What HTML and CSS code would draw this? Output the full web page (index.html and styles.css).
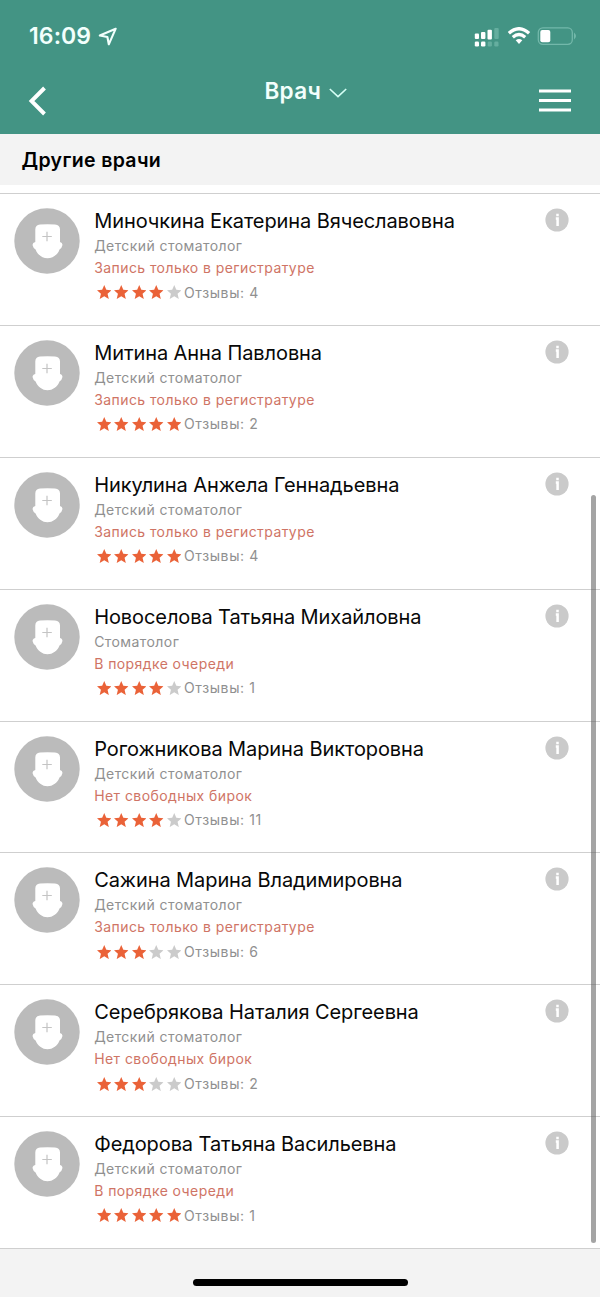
FILE: index.html
```html
<!DOCTYPE html>
<html lang="ru">
<head>
<meta charset="utf-8">
<title>Врач</title>
<link rel="stylesheet" href="styles.css">
</head>
<body>
<svg class="defs" aria-hidden="true">
  <symbol id="avatar" viewBox="0 0 66 66">
    <circle cx="33" cy="33" r="32.7" fill="#bbb"/>
    <path d="M21.300 21.500Q21.300 17 26 16.600Q33.500 15.700 41 16.600Q46 17 46 21.500V34Q49 35 48.300 37.500Q47.700 40.500 45.500 41.500C44 46.500 38.500 50.300 33.500 50.300S23.300 46.500 21.600 41.500Q19.300 40.500 18.700 37.500Q18 35 21.300 34Z" fill="#fff"/>
    <path d="M28.300 28.500H37.800M33 23.700V33.300" stroke="#c4c4c4" stroke-width="1.200"/>
  </symbol>
  <symbol id="star" viewBox="0 0 14 14">
    <path d="M7 0 9 4.700 14 5.100 10.200 8.500 11.400 13.600 7 10.900 2.600 13.600 3.800 8.500 0 5.100 5 4.700Z" fill="currentColor"/>
  </symbol>
  <symbol id="info" viewBox="0 0 24 24">
    <circle cx="12" cy="12" r="11.600" fill="#cacaca"/>
    <path d="M12.500 5.800V8.200M10.800 10.400H12.600V18" fill="none" stroke="#fff" stroke-width="2.500"/>
  </symbol>
</svg>
<div class="screen">
  <header class="header">
    <div class="status">
      <span class="time">16:09</span>
      <svg class="location" viewBox="0 0 20 20"><path d="M17.700 1.700 1.800 8.500 9.400 10 10.800 17.300Z" fill="none" stroke="#f2fffc" stroke-width="2.100" stroke-linejoin="round"/></svg>
      <svg class="signal" viewBox="0 0 26 20">
        <g fill="#fff"><rect x=".8" y="6.500" width="4.200" height="5.500" rx="1"/><rect x="7" y="5" width="4.400" height="7" rx="1"/><rect x="13.500" y="2.700" width="4.400" height="9.800" rx="1"/><rect x=".8" y="14.500" width="4.200" height="5" rx="1.200"/><rect x="7" y="14.500" width="4.400" height="5" rx="1.200"/></g>
        <g fill="#65ae9f"><rect x="20.300" y="1" width="4.400" height="11" rx="1"/><rect x="13.700" y="14.500" width="4.200" height="5" rx="1.200"/><rect x="20.300" y="14.500" width="4.200" height="5" rx="1.200"/></g>
      </svg>
      <svg class="wifi" viewBox="0 0 24 18"><path d="M1.900 6.200Q12 -2.800 22.100 6.200M5.800 10.200Q12 4.900 18.200 10.200" fill="none" stroke="#fff" stroke-width="3.300"/><path d="M8.700 13.300Q12 10.900 15.300 13.300L12 17Z" fill="#fff"/></svg>
      <svg class="battery" viewBox="0 0 40 20"><rect x="1.300" y="1.800" width="34" height="16.500" rx="4.500" fill="none" stroke="#73b8aa" stroke-width="1.300"/><path d="M37 6.500Q41 10 37 13.500Z" fill="#73b8aa"/><rect x="3.300" y="4" width="10" height="12.200" rx="2" fill="#fff"/></svg>
    </div>
    <nav class="nav">
      <svg class="back" viewBox="0 0 20 30"><path d="M16.500 2 3.500 15 16.500 28" fill="none" stroke="#fff" stroke-width="3.900"/></svg>
      <div class="title"><span>Врач</span><svg class="chevron" viewBox="0 0 18 12"><path d="M.8 2 9 9.700 17.200 2" fill="none" stroke="#d5fff5" stroke-width="1.600"/></svg></div>
      <svg class="menu" viewBox="0 0 32 24"><path d="M0 2H32M0 11.500H32M0 21H32" stroke="#fff" stroke-width="2.900"/></svg>
    </nav>
  </header>
  <h1 class="section">Другие врачи</h1>
  <main class="list">
    <article class="row">
      <svg class="avatar"><use href="#avatar"/></svg>
      <div class="body">
        <h2 class="name">Миночкина Екатерина Вячеславовна</h2>
        <p class="role">Детский стоматолог</p>
        <p class="note">Запись только в регистратуре</p>
        <div class="rating"><svg class="star"><use href="#star"/></svg><svg class="star"><use href="#star"/></svg><svg class="star"><use href="#star"/></svg><svg class="star"><use href="#star"/></svg><svg class="star off"><use href="#star"/></svg><span class="reviews">Отзывы: 4</span></div>
      </div>
      <svg class="info"><use href="#info"/></svg>
    </article>
    <article class="row">
      <svg class="avatar"><use href="#avatar"/></svg>
      <div class="body">
        <h2 class="name">Митина Анна Павловна</h2>
        <p class="role">Детский стоматолог</p>
        <p class="note">Запись только в регистратуре</p>
        <div class="rating"><svg class="star"><use href="#star"/></svg><svg class="star"><use href="#star"/></svg><svg class="star"><use href="#star"/></svg><svg class="star"><use href="#star"/></svg><svg class="star"><use href="#star"/></svg><span class="reviews">Отзывы: 2</span></div>
      </div>
      <svg class="info"><use href="#info"/></svg>
    </article>
    <article class="row">
      <svg class="avatar"><use href="#avatar"/></svg>
      <div class="body">
        <h2 class="name">Никулина Анжела Геннадьевна</h2>
        <p class="role">Детский стоматолог</p>
        <p class="note">Запись только в регистратуре</p>
        <div class="rating"><svg class="star"><use href="#star"/></svg><svg class="star"><use href="#star"/></svg><svg class="star"><use href="#star"/></svg><svg class="star"><use href="#star"/></svg><svg class="star"><use href="#star"/></svg><span class="reviews">Отзывы: 4</span></div>
      </div>
      <svg class="info"><use href="#info"/></svg>
    </article>
    <article class="row">
      <svg class="avatar"><use href="#avatar"/></svg>
      <div class="body">
        <h2 class="name">Новоселова Татьяна Михайловна</h2>
        <p class="role">Стоматолог</p>
        <p class="note">В порядке очереди</p>
        <div class="rating"><svg class="star"><use href="#star"/></svg><svg class="star"><use href="#star"/></svg><svg class="star"><use href="#star"/></svg><svg class="star"><use href="#star"/></svg><svg class="star off"><use href="#star"/></svg><span class="reviews">Отзывы: 1</span></div>
      </div>
      <svg class="info"><use href="#info"/></svg>
    </article>
    <article class="row">
      <svg class="avatar"><use href="#avatar"/></svg>
      <div class="body">
        <h2 class="name">Рогожникова Марина Викторовна</h2>
        <p class="role">Детский стоматолог</p>
        <p class="note">Нет свободных бирок</p>
        <div class="rating"><svg class="star"><use href="#star"/></svg><svg class="star"><use href="#star"/></svg><svg class="star"><use href="#star"/></svg><svg class="star"><use href="#star"/></svg><svg class="star off"><use href="#star"/></svg><span class="reviews">Отзывы: 11</span></div>
      </div>
      <svg class="info"><use href="#info"/></svg>
    </article>
    <article class="row">
      <svg class="avatar"><use href="#avatar"/></svg>
      <div class="body">
        <h2 class="name">Сажина Марина Владимировна</h2>
        <p class="role">Детский стоматолог</p>
        <p class="note">Запись только в регистратуре</p>
        <div class="rating"><svg class="star"><use href="#star"/></svg><svg class="star"><use href="#star"/></svg><svg class="star"><use href="#star"/></svg><svg class="star off"><use href="#star"/></svg><svg class="star off"><use href="#star"/></svg><span class="reviews">Отзывы: 6</span></div>
      </div>
      <svg class="info"><use href="#info"/></svg>
    </article>
    <article class="row">
      <svg class="avatar"><use href="#avatar"/></svg>
      <div class="body">
        <h2 class="name">Серебрякова Наталия Сергеевна</h2>
        <p class="role">Детский стоматолог</p>
        <p class="note">Нет свободных бирок</p>
        <div class="rating"><svg class="star"><use href="#star"/></svg><svg class="star"><use href="#star"/></svg><svg class="star"><use href="#star"/></svg><svg class="star off"><use href="#star"/></svg><svg class="star off"><use href="#star"/></svg><span class="reviews">Отзывы: 2</span></div>
      </div>
      <svg class="info"><use href="#info"/></svg>
    </article>
    <article class="row">
      <svg class="avatar"><use href="#avatar"/></svg>
      <div class="body">
        <h2 class="name">Федорова Татьяна Васильевна</h2>
        <p class="role">Детский стоматолог</p>
        <p class="note">В порядке очереди</p>
        <div class="rating"><svg class="star"><use href="#star"/></svg><svg class="star"><use href="#star"/></svg><svg class="star"><use href="#star"/></svg><svg class="star"><use href="#star"/></svg><svg class="star"><use href="#star"/></svg><span class="reviews">Отзывы: 1</span></div>
      </div>
      <svg class="info"><use href="#info"/></svg>
    </article>
    <div class="scrollbar"></div>
  </main>
  <footer class="footer"><div class="home"></div></footer>
</div>
</body>
</html>
```
FILE: styles.css
```css
* { box-sizing: border-box; margin: 0; padding: 0; }
body { font-family: Inter, "Liberation Sans", sans-serif; background: #f3f3f3; color: #080808; }
svg { display: block; flex: none; }
.defs { display: none; }
.screen { width: 600px; height: 1297px; display: flex; flex-direction: column; overflow: hidden; }

.header { height: 134px; flex: none; background: #439484; color: #f2fffc; }
.status { height: 72px; display: flex; align-items: center; padding: 0 24.5px 0 29px; }
.time { font-size: 23px; font-weight: 600; letter-spacing: .1px; width: 69px; line-height: 28px; white-space: nowrap; }
.location { width: 20px; height: 20px; margin: 1px auto 0 0; }
.signal { width: 26px; height: 20px; margin-top: 1px; }
.wifi { width: 24px; height: 18px; margin: 0 6px 0 7px; }
.battery { width: 40px; height: 20px; margin-right: -1px; }
.nav { height: 62px; display: grid; grid-template-columns: 80px 1fr 61px; align-items: start; }
.back { width: 20px; height: 30px; margin: 14px 0 0 28px; }
.title { display: flex; justify-content: center; align-items: center; gap: 8px; padding-top: 5px; margin-left: -7.5px; font-size: 22.5px; font-weight: 600; line-height: 28px; letter-spacing: .3px; }
.chevron { width: 18px; height: 12px; margin-top: 4px; }
.menu { width: 32px; height: 24px; margin-top: 17px; }

.section { height: 51px; flex: none; padding-left: 21.5px; line-height: 52px; font-size: 19.5px; font-weight: 600; letter-spacing: .35px; color: #000; }
.list { position: relative; flex: none; padding-top: 8px; background: #fff; border-bottom: 1px solid #cfcfcf; }
.row { height: 131.875px; display: flex; align-items: flex-start; border-top: 1px solid #cfcfcf; padding: 14px 31.5px 0 14px; }
.avatar { width: 66px; height: 66px; }
.body { flex: 1; min-width: 0; padding-left: 14.2px; white-space: nowrap; }
.name { font-size: 20px; font-weight: 400; line-height: 26px; letter-spacing: -.09px; }
.role, .note, .reviews { font-size: 14px; letter-spacing: .42px; }
.role { color: #909090; line-height: 22px; margin-top: 1px; }
.note { color: #cf7465; line-height: 22px; }
.rating { display: flex; align-items: center; gap: 3px; height: 27px; padding-left: 2.5px; color: #ea6238; }
.star { width: 14.5px; height: 14.5px; }
.off { color: #cbcbcb; }
.reviews { color: #909090; line-height: 22px; margin-left: -.2px; letter-spacing: .6px; }
.info { width: 24px; height: 24px; }
.scrollbar { position: absolute; right: 4px; top: 310px; width: 5px; height: 748px; border-radius: 3px; background: rgba(90, 90, 90, .55); }

.footer { flex: 1; display: flex; justify-content: center; align-items: flex-start; padding-top: 30px; }
.home { width: 215px; height: 7px; border-radius: 4px; background: #000; }
```
